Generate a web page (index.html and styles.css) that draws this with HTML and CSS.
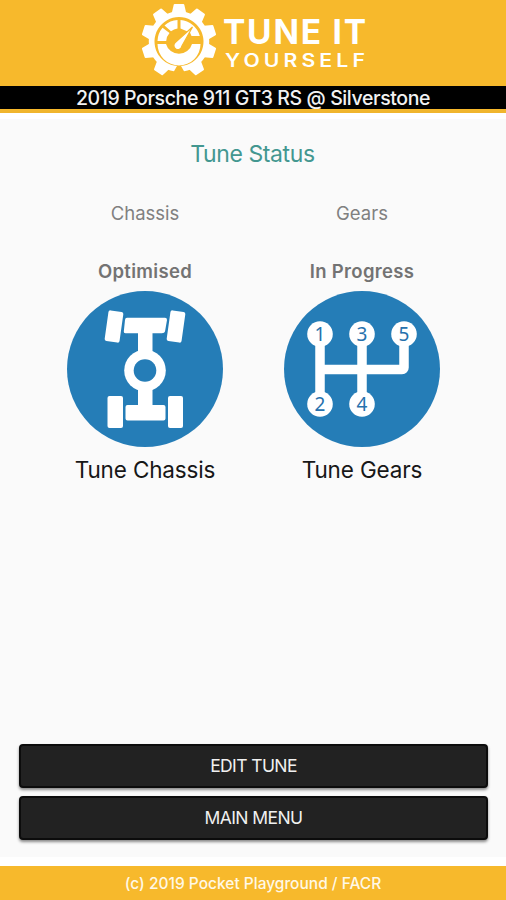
FILE: index.html
```html
<!DOCTYPE html>
<html lang="en">
<head>
<meta charset="utf-8">
<title>Tune It Yourself</title>
<link rel="stylesheet" href="styles.css">
</head>
<body>
<div class="app">
  <header class="header">
    <svg class="logo" viewBox="0 0 230 80" width="230" height="80">
      <defs><path id="tooth" d="M-7.200 -28.500 L-5.300 -36.700 Q-5.100 -37.500 -4.300 -37.500 H4.300 Q5.100 -37.500 5.300 -36.700 L7.200 -28.500 Z"/></defs>
      <g transform="translate(41 41.5)" fill="#fff">
        <path d="M-5 29.800 A30.200 30.200 0 1 1 5 29.800 L2 24.500 A24.500 24.500 0 1 0 -2 24.500 Z"/>
        <use href="#tooth"/>
        <use href="#tooth" transform="rotate(36)"/>
        <use href="#tooth" transform="rotate(72)"/>
        <use href="#tooth" transform="rotate(108)"/>
        <use href="#tooth" transform="rotate(146)"/>
        <use href="#tooth" transform="rotate(214)"/>
        <use href="#tooth" transform="rotate(252)"/>
        <use href="#tooth" transform="rotate(288)"/>
        <use href="#tooth" transform="rotate(324)"/>
        <path d="M-21.5 2.500 A21.5 21.5 0 0 0 21.5 2.500 H13 A13.500 13.500 0 0 1 -13 2.500 Z"/>
        <path d="M-21.5 -0.500 A21.5 21.5 0 0 1 -16.500 -13.800 L-9.500 -8.500 A13 13 0 0 0 -12.8 -0.500 Z"/>
        <path d="M-14.500 -16 A21.5 21.5 0 0 1 -1.5 -21.5 V-13 A13 13 0 0 0 -8 -10.2 Z"/>
        <path d="M1.5 -21.5 A21.5 21.5 0 0 1 20.8 -5.5 L12.500 -5.500 L11 -9 L5 -11.500 L1.5 -13 Z"/>
        <path class="needle" d="M13.500 -14.500 L-3.5 0.800 A4 4 0 1 0 2.8 4.8 Z"/>
      </g>
      <text class="logo-big" x="85" y="43.500" textLength="143">TUNE IT</text>
      <text class="logo-small" x="87" y="66.500" textLength="144" lengthAdjust="spacingAndGlyphs">YOURSELF</text>
    </svg>
    <div class="car">2019 Porsche 911 GT3 RS @ Silverstone</div>
  </header>
  <main class="main">
    <h1 class="title">Tune Status</h1>
    <div class="columns">
      <section class="column">
        <div class="label">Chassis</div>
        <div class="status">Optimised</div>
        <svg class="icon" viewBox="0 0 156 156">
          <circle cx="78" cy="78" r="78" fill="#257db7"/>
          <g fill="#fff">
            <rect x="-7.5" y="-15.500" width="15" height="31" rx="2" transform="translate(47 35.500) rotate(8)"/>
            <rect x="-7.5" y="-15.500" width="15" height="31" rx="2" transform="translate(109 35.500) rotate(8)"/>
            <path d="M60 26.800 H98 Q100 26.800 100 29 L98 40.500 Q97.500 42.300 95 42.300 H85.500 V114 H96.500 Q98.500 114 98.500 116 V127.500 Q98.500 129.500 96.500 129.500 H60.500 Q58.500 129.500 58.500 127.500 V116 Q58.500 114 60.500 114 H71 V42.300 H58.500 Q56.500 42.300 56.800 40.500 L58 29 Q58.200 26.800 60 26.800 Z"/>
            <circle cx="78" cy="79.500" r="20.800"/>
            <rect x="40.500" y="105" width="15.500" height="32" rx="2"/>
            <rect x="101" y="105" width="15" height="32" rx="2"/>
          </g>
          <circle cx="78" cy="79.500" r="11.300" fill="#257db7"/>
        </svg>
        <div class="caption">Tune Chassis</div>
      </section>
      <section class="column">
        <div class="label">Gears</div>
        <div class="status">In Progress</div>
        <svg class="icon" viewBox="0 0 156 156">
          <circle cx="78" cy="78" r="78" fill="#257db7"/>
          <path d="M36 43 V113 M78 43 V113 M36 78.500 H118 Q120 78.500 120 76.500 V43" fill="none" stroke="#fff" stroke-width="9.500"/>
          <g fill="#fff">
            <circle cx="36" cy="43" r="12.800"/><circle cx="78" cy="43" r="12.800"/><circle cx="120" cy="43" r="12.800"/>
            <circle cx="36" cy="113" r="12.800"/><circle cx="78" cy="113" r="12.800"/>
          </g>
          <g class="gear-number">
            <text x="36" y="50">1</text><text x="78" y="50">3</text><text x="120" y="50">5</text>
            <text x="36" y="120">2</text><text x="78" y="120">4</text>
          </g>
        </svg>
        <div class="caption">Tune Gears</div>
      </section>
    </div>
    <div class="actions">
      <button class="button">EDIT TUNE</button>
      <button class="button">MAIN MENU</button>
    </div>
  </main>
  <footer class="footer">(c) 2019 Pocket Playground / FACR</footer>
</div>
</body>
</html>
```
FILE: styles.css
```css
* { box-sizing: border-box; }
body { margin: 0; font-family: Inter, "Liberation Sans", sans-serif; }
.app { height: 900px; display: flex; flex-direction: column; background: #fafafa; overflow: hidden; }
.header { height: 113px; background: #f7b92c; border-bottom: 3px solid #f0b52d; }
.logo { display: block; margin-left: 138px; height: 80px; overflow: visible; }
.needle { stroke: #f7b92c; stroke-width: 1.2; }
.logo-big, .logo-small { font-family: Inter, sans-serif; fill: #fff; }
.logo-big { font-size: 33.5px; font-weight: 700; }
.logo-small { font-size: 18px; font-weight: 600; letter-spacing: 3.5px; }
.car { margin-top: 6px; height: 23px; line-height: 25px; background: #000; color: #f2f2f2; text-align: center; font-size: 19.5px; font-weight: 500; letter-spacing: -0.4px; white-space: nowrap; }
.main { flex: 1; display: flex; flex-direction: column; border-top: 6px solid #fff; border-bottom: 9px solid #fff; }
.title { margin: 21px 1px 0 0; text-align: center; font-size: 23px; line-height: 28px; font-weight: 400; letter-spacing: -0.4px; color: #439790; }
.columns { display: flex; justify-content: center; gap: 61px; margin: 33px 0 0 1px; }
.column { width: 156px; display: flex; flex-direction: column; align-items: center; white-space: nowrap; }
.label { font-size: 18.5px; line-height: 24px; color: #808080; }
.status { margin-top: 34px; font-size: 18.5px; line-height: 25px; font-weight: 600; letter-spacing: 0.3px; color: #737373; }
.icon { width: 156px; height: 156px; margin-top: 7px; flex: none; }
.caption { margin-top: 8px; font-size: 22.5px; line-height: 30px; letter-spacing: -0.15px; color: #171717; }
.gear-number { font-family: "Noto Sans", sans-serif; font-size: 19px; text-anchor: middle; fill: #2671ad; }
.actions { margin: auto 18px 17px 19px; display: flex; flex-direction: column; gap: 8px; }
.button { height: 44px; border: 2px solid #0c0c0c; border-radius: 4px; background: #222; color: #f0f0f0; font: 400 17.5px/40px Inter, sans-serif; padding: 0; letter-spacing: -0.6px; box-shadow: 0 2px 3px rgba(0,0,0,.45); }
.footer { height: 34px; line-height: 35px; background: #f7b92c; color: #fff8e6; text-align: center; font-size: 15.5px; font-weight: 500; }
```
